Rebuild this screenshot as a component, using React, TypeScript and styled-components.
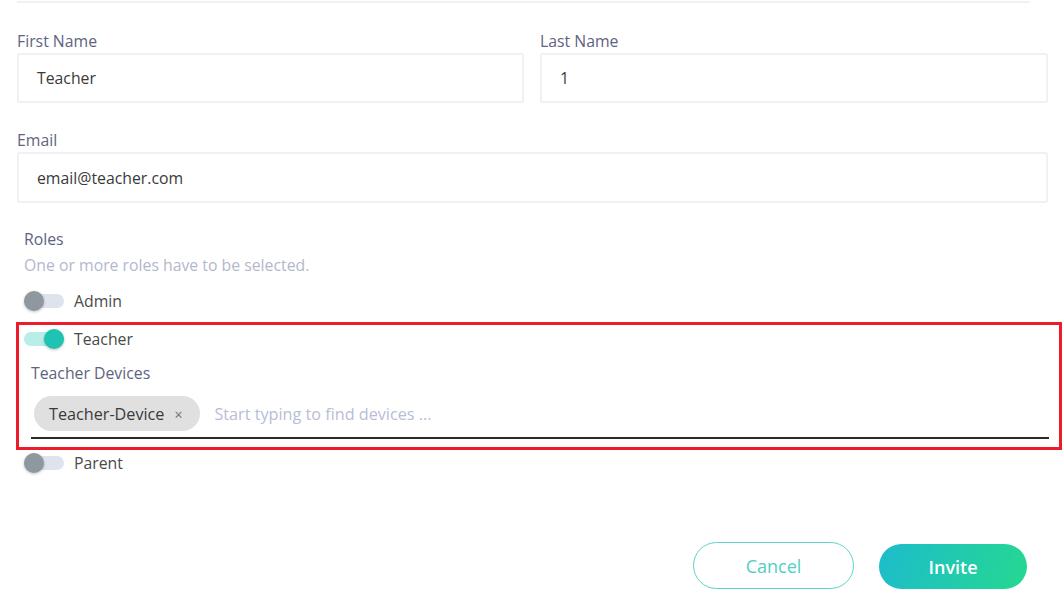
import React from "react";
import styled, { createGlobalStyle } from "styled-components";

const Global = createGlobalStyle`
  html, body { margin: 0; padding: 0; background: #ffffff; }
  body { font-family: "Open Sans", "Noto Sans", sans-serif; }
  * { box-sizing: border-box; }
`;

const Page = styled.div`
  width: 1062px;
  height: 614px;
  padding: 1px 14px 0 17px;
  display: flex;
  flex-direction: column;
  overflow: hidden;
`;

const Divider = styled.div`
  height: 2px;
  background: #f0f0f6;
  margin-right: 18px;
`;

const Row = styled.div`
  display: grid;
  grid-template-columns: 507px 1fr;
  gap: 16px;
  margin-top: 28px;
`;

const Field = styled.div<{ $mt?: number }>`
  display: flex;
  flex-direction: column;
  margin-top: ${(p) => p.$mt ?? 0}px;
`;

const Label = styled.label`
  font-size: 15.8px;
  color: #5e6480;
  line-height: 20px;
  margin-bottom: 2px;
`;

const Input = styled.div<{ $h?: number }>`
  height: ${(p) => p.$h ?? 50}px;
  border: 2px solid #f0f0f6;
  border-radius: 2px;
  display: flex;
  align-items: center;
  padding-left: 18px;
  font-size: 15.8px;
  color: #3a3a3a;
`;

const Roles = styled.div`
  display: flex;
  flex-direction: column;
  margin-top: 25px;
  padding-left: 7px;
`;

const RolesTitle = styled.div`
  font-size: 15.8px;
  color: #5e6480;
  line-height: 22px;
`;

const Hint = styled.div`
  font-size: 15.8px;
  color: #b3b8cb;
  line-height: 22px;
  margin-top: 4px;
`;

const ToggleRow = styled.div<{ $mt?: number }>`
  display: flex;
  align-items: center;
  gap: 10px;
  height: 24px;
  margin-top: ${(p) => p.$mt ?? 0}px;
  font-size: 15.8px;
  color: #4a4a4a;
`;

const Track = styled.span<{ $on?: boolean }>`
  position: relative;
  width: 40px;
  height: 14px;
  border-radius: 7px;
  background: ${(p) => (p.$on ? "#b8ede8" : "#dfe3ee")};
  flex: none;
`;

const Knob = styled.span<{ $on?: boolean }>`
  position: absolute;
  top: -3px;
  left: ${(p) => (p.$on ? "20px" : "0")};
  width: 20px;
  height: 20px;
  border-radius: 50%;
  background: ${(p) => (p.$on ? "#1fc3b3" : "#8f989f")};
  box-shadow: 0 1px 3px rgba(0, 0, 0, 0.25);
`;

const Highlight = styled.div`
  margin: 9px -14px 0 -8px;
  border: 3px solid #ec1c2b;
  padding: 2px 10px 8px 5px;
  display: flex;
  flex-direction: column;
`;

const SubLabel = styled.div`
  font-size: 15.8px;
  color: #5e6480;
  line-height: 22px;
  margin: 11px 0 0 7px;
`;

const DeviceInput = styled.div`
  display: flex;
  align-items: center;
  gap: 14px;
  margin: 12px 0 0 7px;
  padding: 0 0 6px 3px;
  border-bottom: 2px solid #2a2a2a;
`;

const Chip = styled.span`
  display: inline-flex;
  align-items: center;
  height: 35px;
  padding: 0 18px 0 15px;
  border-radius: 18px;
  background: #e0e0e0;
  font-size: 16.2px;
  color: #3a3a3a;
  gap: 10px;
`;

const ChipClose = styled.span`
  font-size: 14px;
  color: #707070;
  margin-top: 2px;
`;

const Placeholder = styled.span`
  font-size: 16.2px;
  color: #b8bdd6;
`;

const Actions = styled.div`
  display: flex;
  justify-content: flex-end;
  gap: 25px;
  margin-top: 67px;
  padding-right: 21px;
`;

const Button = styled.button<{ $primary?: boolean }>`
  height: ${(p) => (p.$primary ? "45px" : "47px")};
  width: ${(p) => (p.$primary ? "148px" : "161px")};
  margin-top: ${(p) => (p.$primary ? "2px" : "0")};
  border-radius: 24px;
  font-family: "Open Sans", sans-serif;
  font-size: 18px;
  cursor: pointer;
  border: ${(p) => (p.$primary ? "none" : "1.5px solid #5ad5cb")};
  background: ${(p) =>
    p.$primary ? "linear-gradient(110deg, #1dbccc 0%, #25d890 100%)" : "#ffffff"};
  color: ${(p) => (p.$primary ? "#ffffff" : "#4fcfc4")};
  font-weight: ${(p) => (p.$primary ? 600 : 400)};
`;

function Toggle({ on, label, mt }: { on?: boolean; label: string; mt?: number }) {
  return (
    <ToggleRow $mt={mt}>
      <Track $on={on}>
        <Knob $on={on} />
      </Track>
      <span>{label}</span>
    </ToggleRow>
  );
}

export default function App() {
  return (
    <>
      <Global />
      <Page>
        <Divider />
        <Row>
          <Field>
            <Label>First Name</Label>
            <Input>Teacher</Input>
          </Field>
          <Field>
            <Label>Last Name</Label>
            <Input>1</Input>
          </Field>
        </Row>
        <Field $mt={27}>
          <Label>Email</Label>
          <Input $h={51}>email@teacher.com</Input>
        </Field>
        <Roles>
          <RolesTitle>Roles</RolesTitle>
          <Hint>One or more roles have to be selected.</Hint>
          <Toggle label="Admin" mt={13} />
          <Highlight>
            <Toggle on label="Teacher" />
            <SubLabel>Teacher Devices</SubLabel>
            <DeviceInput>
              <Chip>
                Teacher-Device
                <ChipClose>×</ChipClose>
              </Chip>
              <Placeholder>Start typing to find devices ...</Placeholder>
            </DeviceInput>
          </Highlight>
          <Toggle label="Parent" mt={1} />
        </Roles>
        <Actions>
          <Button>Cancel</Button>
          <Button $primary>Invite</Button>
        </Actions>
      </Page>
    </>
  );
}
